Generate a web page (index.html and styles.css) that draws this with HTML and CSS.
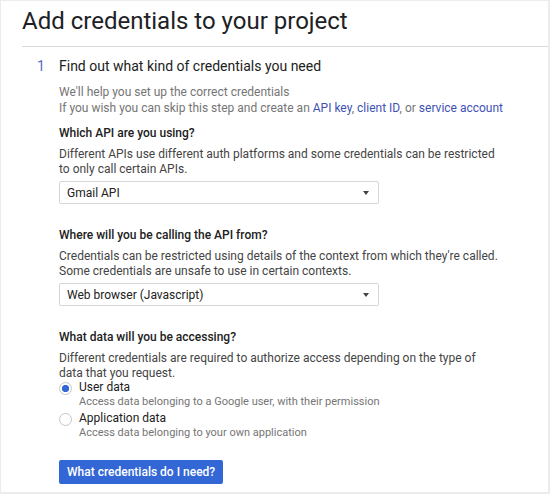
FILE: index.html
```html
<!DOCTYPE html>
<html>
<head>
<meta charset="utf-8">
<link rel="stylesheet" href="styles.css">
</head>
<body>
<div class="frame">
  <h1 class="title">Add credentials to your project</h1>
  <div class="divider"></div>
  <div class="step">
    <div class="step-num">1</div>
    <div class="step-body">
      <div class="step-title">Find out what kind of credentials you need</div>
      <p class="hint">We'll help you set up the correct credentials<br>If you wish you can skip this step and create an <a class="link">API key</a>, <a class="link">client ID</a>, or <a class="link">service account</a></p>

      <div class="field">
        <div class="label">Which API are you using?</div>
        <p class="desc">Different APIs use different auth platforms and some credentials can be restricted to only call certain APIs.</p>
        <div class="select"><span>Gmail API</span><span class="arrow"></span></div>
      </div>

      <div class="field">
        <div class="label">Where will you be calling the API from?</div>
        <p class="desc">Credentials can be restricted using details of the context from which they're called. Some credentials are unsafe to use in certain contexts.</p>
        <div class="select"><span>Web browser (Javascript)</span><span class="arrow"></span></div>
      </div>

      <div class="field">
        <div class="label">What data will you be accessing?</div>
        <p class="desc">Different credentials are required to authorize access depending on the type of data that you request.</p>
        <div class="radio-row">
          <span class="radio checked"></span>
          <div class="radio-text">
            <div class="radio-label">User data</div>
            <div class="radio-sub">Access data belonging to a Google user, with their permission</div>
          </div>
        </div>
        <div class="radio-row">
          <span class="radio"></span>
          <div class="radio-text">
            <div class="radio-label">Application data</div>
            <div class="radio-sub">Access data belonging to your own application</div>
          </div>
        </div>
      </div>

      <button class="btn">What credentials do I need?</button>
    </div>
  </div>
</div>
</body>
</html>
```

FILE: styles.css
```css
html, body {
  margin: 0;
  padding: 0;
  background: #fff;
}
.frame {
  box-sizing: border-box;
  width: 550px;
  height: 494px;
  border: 1px solid #ececec;
  border-bottom-width: 2px;
  border-right-width: 2px;
  font-family: Roboto, "Liberation Sans", sans-serif;
  color: #444;
  overflow: hidden;
}
.title {
  margin: 6px 0 0 21px;
  font-size: 24px;
  font-weight: 400;
  line-height: 28px;
  color: #202124;
}
.divider {
  margin: 11px 0 0 21px;
  height: 1px;
  background: #dadada;
}
.step {
  display: flex;
  margin-top: 10px;
  padding-left: 36px;
}
.step-num {
  width: 22px;
  font-size: 14px;
  line-height: 18px;
  color: #5c6bc0;
}
.step-body {
  flex: 1;
}
.step-title {
  font-size: 14px;
  line-height: 18px;
  color: #212121;
}
.hint {
  margin: 9px 0 0 0;
  font-size: 12px;
  line-height: 16px;
  color: #757575;
}
.link {
  color: #3f51b5;
  text-decoration: none;
}
.field {
  margin-top: 9px;
}
.field + .field {
  margin-top: 23px;
}
.label {
  font-size: 12px;
  line-height: 16px;
  font-weight: 500;
  color: #212121;
}
.desc {
  margin: 6px 0 0 0;
  width: 440px;
  font-size: 12px;
  line-height: 15px;
  color: #444;
}
.select {
  box-sizing: border-box;
  display: flex;
  justify-content: space-between;
  align-items: center;
  width: 320px;
  height: 23px;
  margin-top: 4px;
  padding: 0 9px 0 7px;
  border: 1px solid #d6d6d6;
  border-radius: 2px;
  font-size: 12px;
  color: #212121;
}
.arrow {
  width: 0;
  height: 0;
  border-left: 3.5px solid transparent;
  border-right: 3.5px solid transparent;
  border-top: 4px solid #444;
}
.radio-row {
  display: flex;
  align-items: flex-start;
}
.radio-row + .radio-row {
  margin-top: 3px;
}
.radio {
  box-sizing: border-box;
  flex: none;
  width: 13px;
  height: 13px;
  margin-top: 1px;
  margin-right: 7px;
  border-radius: 50%;
  border: 1px solid #c6c6c6;
  background: #fff;
}
.radio.checked {
  background: radial-gradient(circle, #3367d6 0 3.3px, #fff 4px);
}
.radio-label {
  font-size: 12px;
  line-height: 13px;
  color: #212121;
}
.radio-sub {
  font-size: 11px;
  line-height: 15px;
  color: #757575;
}
.btn {
  display: block;
  margin-top: 20px;
  height: 24px;
  padding: 0 8px;
  border: none;
  border-radius: 2px;
  background: #3367d6;
  color: #fff;
  font-family: Roboto, "Liberation Sans", sans-serif;
  font-size: 12px;
  font-weight: 500;
}
```
